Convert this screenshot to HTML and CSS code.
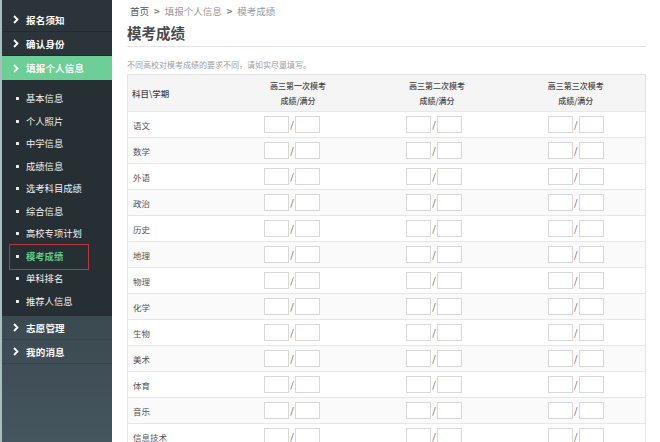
FILE: index.html
```html
<!DOCTYPE html>
<html lang="zh">
<head>
<meta charset="utf-8">
<link rel="stylesheet" href="styles.css">
</head>
<body>
<div class="page">
  <aside class="sidebar">
    <div class="top">
      <div class="nav-item"><svg class="chev" viewBox="0 0 6 9"><polyline points="1,1 4.5,4.5 1,8"/></svg><span>报名须知</span></div>
      <div class="nav-item"><svg class="chev" viewBox="0 0 6 9"><polyline points="1,1 4.5,4.5 1,8"/></svg><span>确认身份</span></div>
      <div class="nav-item active"><svg class="chev" viewBox="0 0 6 9"><polyline points="1,1 4.5,4.5 1,8"/></svg><span>填报个人信息</span></div>
    </div>
    <ul class="submenu">
      <li>基本信息</li>
      <li>个人照片</li>
      <li>中学信息</li>
      <li>成绩信息</li>
      <li>选考科目成绩</li>
      <li>综合信息</li>
      <li>高校专项计划</li>
      <li class="current">模考成绩</li>
      <li>单科排名</li>
      <li>推荐人信息</li>
    </ul>
    <div class="bottom">
      <div class="nav-item"><svg class="chev" viewBox="0 0 6 9"><polyline points="1,1 4.5,4.5 1,8"/></svg><span>志愿管理</span></div>
      <div class="nav-item"><svg class="chev" viewBox="0 0 6 9"><polyline points="1,1 4.5,4.5 1,8"/></svg><span>我的消息</span></div>
    </div>
  </aside>
  <main class="main">
    <div class="crumbs"><span class="home">首页</span><span class="sep">&gt;</span><span>填报个人信息</span><span class="sep">&gt;</span><span>模考成绩</span></div>
    <h1 class="title">模考成绩</h1>
    <p class="note">不同高校对模考成绩的要求不同，请如实尽量填写。</p>
    <table class="grid">
      <thead>
        <tr><th class="subj">科目\学期</th><th>高三第一次模考<br>成绩/满分</th><th>高三第二次模考<br>成绩/满分</th><th>高三第三次模考<br>成绩/满分</th></tr>
      </thead>
      <tbody id="rows"></tbody>
    </table>
  </main>
</div>
<script src="app.js"></script>
</body>
</html>
```
FILE: app.js
```js
var subjects = ["语文","数学","外语","政治","历史","地理","物理","化学","生物","美术","体育","音乐","信息技术"];
var tb = document.getElementById("rows");
var cell = '<td><span class="pair"><span class="box"></span><span class="slash">/</span><span class="box"></span></span></td>';
subjects.forEach(function (s) {
  var tr = document.createElement("tr");
  tr.innerHTML = '<td class="subj">' + s + '</td>' + cell + cell + cell;
  tb.appendChild(tr);
});
```
FILE: styles.css
```css
* { box-sizing: border-box; }
html, body { margin: 0; padding: 0; }
body {
  width: 660px;
  height: 442px;
  overflow: hidden;
  background: #fff;
  font-family: "Noto Sans CJK SC", "Noto Sans", sans-serif;
}
.page { display: flex; height: 442px; }

.sidebar {
  width: 112px;
  flex: none;
  display: flex;
  flex-direction: column;
  background: linear-gradient(#2c363a 0, #2a3337 80px, #3b4951 320px, #46565e 442px);
  border-left: 2px solid #a9bfbe;
  color: #fff;
}
.top { padding-top: 8px; background: #2b3539; }
.nav-item {
  height: 24px;
  display: flex;
  align-items: center;
  padding-left: 11px;
  font-size: 9.5px;
  font-weight: 700;
  border-bottom: 1px solid #222b2f;
  letter-spacing: 0.2px;
}
.nav-item .chev {
  width: 6px;
  height: 9px;
  margin-right: 7px;
  fill: none;
  stroke: #fff;
  stroke-width: 1.8;
}
.nav-item.active { background: #6ccf96; border-bottom: none; }

.submenu {
  list-style: none;
  margin: 0;
  padding: 7px 0 4px;
  background: #263034;
}
.submenu li {
  position: relative;
  height: 22.5px;
  display: flex;
  align-items: center;
  padding-left: 24px;
  font-size: 9.3px;
  color: #f2f2f2;
}
.submenu li::before {
  content: "";
  position: absolute;
  left: 14px;
  top: 10px;
  width: 3px;
  height: 3px;
  background: #e8e8e8;
}
.submenu li.current { color: #5fcb8d; font-weight: 700; }
.submenu li.current::after {
  content: "";
  position: absolute;
  left: 7px;
  top: -1px;
  width: 78px;
  height: 24px;
  border: 1.5px solid #b5383c;
}
.bottom { flex: 1; }
.bottom .nav-item { border-bottom: 1px solid #37444b; }

.main {
  flex: 1;
  padding: 0 14px 0 15px;
}
.crumbs {
  height: 22px;
  display: flex;
  align-items: center;
  padding-left: 3px;
  font-size: 9.5px;
  color: #9a9a9a;
}
.crumbs .home { color: #555; }
.crumbs .sep { margin: 0 5px; color: #777; font-weight: 700; }
.title {
  margin: 0;
  height: 25px;
  line-height: 22px;
  font-size: 14.5px;
  font-weight: 700;
  color: #4a4a4a;
  border-bottom: 1px solid #e3e3e3;
}
.note {
  margin: 0;
  height: 27px;
  line-height: 35px;
  font-size: 8px;
  color: #a0a0a0;
}
.grid {
  width: 519px;
  border-collapse: collapse;
  table-layout: fixed;
  border: 1px solid #e5e5e5;
  font-size: 8.5px;
  color: #555;
}
.grid th {
  height: 37px;
  background: #f5f5f5;
  font-weight: 500;
  color: #444;
  line-height: 15px;
  text-align: center;
  width: 139px;
  font-size: 8px;
}
.grid th.subj { width: 101px; text-align: left; padding-left: 4px; font-size: 8.5px; }
.grid td {
  height: 26px;
  border-top: 1px solid #e7e7e7;
  text-align: center;
  padding: 0;
}
.grid td:nth-child(2) { padding-right: 12px; }
.grid td:nth-child(3) { padding-right: 6px; }
.grid td.subj { text-align: left; padding-left: 5px; }
.grid tbody tr:nth-child(even) td { background: #fafafa; }
.pair { display: inline-flex; align-items: center; vertical-align: middle; }
.box {
  width: 25px;
  height: 17px;
  border: 1px solid #d8d8d8;
  background: #fff;
}
.slash { width: 6px; text-align: center; font-size: 9px; color: #555; }
```
